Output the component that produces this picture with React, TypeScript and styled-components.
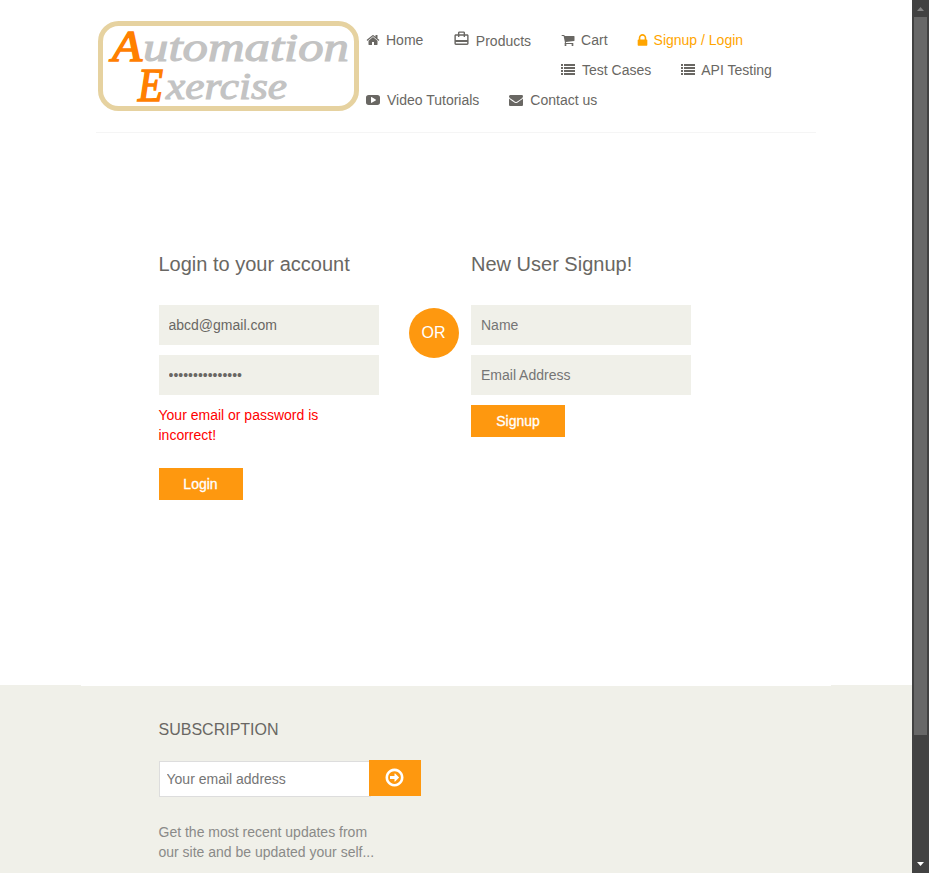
import React from "react";
import styled, { createGlobalStyle } from "styled-components";

const GlobalStyle = createGlobalStyle`
  * { box-sizing: border-box; }
  body {
    margin: 0;
    background: #fff;
    color: #696763;
    font: 14px/20px "Liberation Sans", Arial, sans-serif;
    overflow: hidden;
  }
  input, button { font: inherit; }
`;

const Window = styled.div`
  display: flex;
  width: 929px;
  height: 873px;
  overflow: hidden;
`;

const Page = styled.div`
  display: flex;
  flex-direction: column;
  width: 912px;
`;

const Header = styled.header`
  display: flex;
  height: 133px;
  width: 720px;
  margin-left: 96px;
  padding: 20px 0 0 1px;
  border-bottom: 1px solid #f5f5f5;
`;

const LogoArt = styled.svg`
  display: block;
  width: 264px;
  height: 92px;
  flex: none;
  font-family: "Liberation Serif", serif;
  font-style: italic;
`;

const LogoInitial = styled.text`
  fill: #ff8000;
  stroke: #ff8000;
  stroke-width: 1.6px;
`;

const LogoWord = styled.text`
  fill: #c3c3c3;
  stroke: #c3c3c3;
  stroke-width: 1.1px;
`;

const Nav = styled.nav`
  margin: 10px 0 0 5px;
  display: flex;
  flex-direction: column;
  gap: 10px;
`;

const NavRow = styled.div<{ $indent?: number }>`
  display: flex;
  gap: 30px;
  height: 20px;
  padding-left: ${(p) => p.$indent ?? 0}px;
`;

const NavLink = styled.a<{ $active?: boolean; $drop?: number }>`
  display: flex;
  white-space: nowrap;
  padding-top: ${(p) => p.$drop ?? 0}px;
  color: ${(p) => (p.$active ? "orange" : "#696763")};
`;

const IconSlot = styled.span<{ $width: number; $shift?: number; $lift?: number }>`
  display: block;
  flex: none;
  width: ${(p) => p.$width}px;
  margin-top: ${(p) => 3 - (p.$lift ?? 0)}px;
  & > svg { margin-left: ${(p) => p.$shift ?? 0}px; }
`;

const Glyph = styled.svg<{ $size?: number }>`
  display: block;
  width: ${(p) => p.$size ?? 14}px;
  height: ${(p) => p.$size ?? 14}px;
  fill: currentColor;
  overflow: visible;
`;

const Forms = styled.main`
  display: flex;
  align-items: flex-start;
  height: 552px;
  padding: 120px 0 0 158.5px;
`;

const Form = styled.form`
  display: flex;
  flex-direction: column;
  align-items: flex-start;
  width: 220px;
`;

const Title = styled.h2`
  margin: 0 0 29px;
  font-size: 20px;
  font-weight: 400;
  line-height: 23px;
  white-space: nowrap;
`;

const Field = styled.input`
  width: 220px;
  height: 40px;
  margin: 0 0 10px;
  padding: 0 0 0 10px;
  border: 0;
  outline: 0;
  background: #f0f0e9;
  color: #696763;
  &::placeholder { color: #757575; }
`;

const ErrorText = styled.p`
  width: 190px;
  margin: 0 0 23px;
  color: red;
`;

const Submit = styled.button<{ $width: number }>`
  width: ${(p) => p.$width}px;
  height: 32px;
  padding: 0;
  border: 0;
  background: #fe980f;
  color: #fff;
  -webkit-text-stroke: 0.3px #fff;
`;

const Or = styled.div`
  width: 50px;
  height: 50px;
  margin: 55px 12px 0 30.5px;
  padding-right: 1px;
  border-radius: 50%;
  background: #fe980f;
  color: #fff;
  font-size: 16px;
  line-height: 50px;
  text-align: center;
`;

const Footer = styled.footer`
  flex: 1;
  background: #f0f0e9;
`;

const Strip = styled.div`
  width: 750px;
  height: 1px;
  margin: 0 auto;
  background: #fff;
`;

const Subscription = styled.section`
  padding: 34px 0 0 158.5px;
`;

const SubTitle = styled.h2`
  margin: 0 0 21px;
  font-size: 16px;
  font-weight: 400;
  line-height: 19px;
`;

const SubForm = styled.form`
  display: flex;
  height: 37px;
`;

const SubInput = styled.input`
  width: 212px;
  height: 36px;
  margin: 1px -2px 0 0;
  padding: 0 7px;
  border: 1px solid #ddd;
  background: #fff;
  &::placeholder { color: #757575; }
`;

const SubButton = styled.button`
  display: flex;
  justify-content: center;
  width: 52px;
  height: 36px;
  padding: 6.5px 0 0;
  border: 0;
  background: #fe980f;
  color: #fff;
  z-index: 1;
`;

const Note = styled.p`
  width: 230px;
  margin: 25px 0 0;
  color: #8a8a88;
`;

const Scrollbar = styled.div`
  display: flex;
  flex-direction: column;
  align-items: center;
  width: 17px;
  background: #424242;
`;

const ScrollArrow = styled.svg`
  display: block;
  flex: none;
  width: 17px;
  height: 17px;
`;

const Thumb = styled.div`
  width: 13px;
  height: 718px;
  margin-bottom: auto;
  background: #686868;
`;

const paths = {
  home: "M1472 992v480q0 26-19 45t-45 19h-384v-384h-256v384h-384q-26 0-45-19t-19-45v-480q0-1 .5-3t.5-3l575-474 575 474q1 2 1 6zm223-69l-62 74q-8 9-21 11h-3q-13 0-21-7l-692-577-692 577q-12 8-24 7-13-2-21-11l-62-74q-8-10-7-23.5t11-21.5l719-599q32-26 76-26t76 26l244 204v-195q0-14 9-23t23-9h192q14 0 23 9t9 23v408l219 182q10 8 11 21.5t-7 23.5z",
  cart: "M704 1536q0 52-38 90t-90 38-90-38-38-90 38-90 90-38 90 38 38 90zm896 0q0 52-38 90t-90 38-90-38-38-90 38-90 90-38 90 38 38 90zm128-1088v512q0 24-16.5 42.5t-40.5 21.5l-1044 122q13 60 13 70 0 16-24 64h920q26 0 45 19t19 45-19 45-45 19h-1024q-26 0-45-19t-19-45q0-11 8-31.5t16-36 21.5-40 15.5-29.5l-177-823h-204q-26 0-45-19t-19-45 19-45 45-19h256q16 0 28.5 6.5t19.5 15.5 13 24.5 8 26 5.5 29.5 4.5 26h1201q26 0 45 19t19 45z",
  lock: "M640 768h512v-192q0-106-75-181t-181-75-181 75-75 181v192zm832 96v576q0 40-28 68t-68 28h-960q-40 0-68-28t-28-68v-576q0-40 28-68t68-28h32v-192q0-184 132-316t316-132 316 132 132 316v192h32q40 0 68 28t28 68z",
  list: "M0 1280h256v256H0zM0 896h256v256H0zM0 512h256v256H0zM384 1280h1408v256H384zM384 896h1408v256H384zM384 512h1408v256H384zM0 128h256v256H0zM384 128h1408v256H384z",
  video: "M350 256H1442Q1792 256 1792 606V1186Q1792 1536 1442 1536H350Q0 1536 0 1186V606Q0 256 350 256ZM711 520Q640 480 640 576V1216Q640 1312 721 1260L1240 950Q1320 896 1240 842Z",
  mail: "M1792 710v794q0 66-47 113t-113 47h-1472q-66 0-113-47t-47-113v-794q44 49 101 87 362 246 497 345 57 42 92.5 65.5t94.5 48 110 24.5h2q51 0 110-24.5t94.5-48 92.5-65.5q170-123 498-345 57-39 100-87zm0-294q0 79-49 151t-122 123q-376 261-468 325-10 7-42.5 31t-54 38.5-52 32.5-57.5 27-50 9h-2q-23 0-50-9t-57.5-27-52-32.5-54-38.5-42.5-31q-91-64-262-182.5t-205-142.5q-62-42-117-115.5t-55-136.5q0-78 41.5-130t118.5-52h1472q65 0 112.5 47t47.5 113z",
  arrow: "M1280 896q0 14-9 23l-320 320q-9 9-23 9-13 0-22.5-9.5t-9.5-22.5v-192h-352q-13 0-22.5-9.5t-9.5-22.5v-192q0-13 9.5-22.5t22.5-9.5h352v-192q0-14 9-23t23-9q12 0 24 10l319 319q9 9 9 23zm160 0q0-148-73-273t-198-198-273-73-273 73-198 198-73 273 73 273 198 198 273 73 273-73 198-198 73-273zm224 0q0 209-103 385.5t-279.5 279.5-385.5 103-385.5-103-279.5-279.5-103-385.5 103-385.5 279.5-279.5 385.5-103 385.5 103 279.5 279.5 103 385.5z",
};

function Icon({ name, size }: { name: keyof typeof paths; size?: number }) {
  return (
    <Glyph viewBox="0 0 1792 1792" $size={size} fillRule="evenodd">
      <path d={paths[name]} />
    </Glyph>
  );
}

function Logo() {
  return (
    <LogoArt viewBox="0 0 264 92">
      <rect x="3.5" y="3.5" width="256" height="85" rx="18" fill="#fff" stroke="#e6d2a0" strokeWidth="5" />
      <LogoInitial x="15" y="41" fontSize="44" textLength="30" lengthAdjust="spacingAndGlyphs">A</LogoInitial>
      <LogoWord x="46" y="41" fontSize="41" textLength="206" lengthAdjust="spacingAndGlyphs">utomation</LogoWord>
      <LogoInitial x="41" y="81" fontSize="46" textLength="25" lengthAdjust="spacingAndGlyphs">E</LogoInitial>
      <LogoWord x="69" y="79" fontSize="38" textLength="121" lengthAdjust="spacingAndGlyphs">xercise</LogoWord>
    </LogoArt>
  );
}

export default function App() {
  return (
    <>
      <GlobalStyle />
      <Window>
        <Page>
          <Header>
            <Logo />
            <Nav>
              <NavRow>
                <NavLink><IconSlot $width={20} $shift={-0.5}><Icon name="home" /></IconSlot>Home</NavLink>
                <NavLink $drop={1}>
                  <IconSlot $width={22.5} $lift={4}>
                    <Glyph viewBox="0 0 24 24" $size={17}>
                      <path d="M20 6h-3V4c0-1.11-.89-2-2-2H9c-1.11 0-2 .89-2 2v2H4c-1.11 0-2 .89-2 2v11c0 1.11.89 2 2 2h16c1.11 0 2-.89 2-2V8c0-1.11-.89-2-2-2zM9 4h6v2H9V4zm11 15H4v-2h16v2zm0-5H4V8h3v2h2V8h6v2h2V8h3v6z" />
                    </Glyph>
                  </IconSlot>
                  Products
                </NavLink>
                <NavLink><IconSlot $width={20} $shift={-0.5}><Icon name="cart" /></IconSlot>Cart</NavLink>
                <NavLink $active><IconSlot $width={16} $shift={-2.5}><Icon name="lock" size={15} /></IconSlot>Signup / Login</NavLink>
              </NavRow>
              <NavRow $indent={195}>
                <NavLink><IconSlot $width={21}><Icon name="list" /></IconSlot>Test Cases</NavLink>
                <NavLink><IconSlot $width={20}><Icon name="list" /></IconSlot>API Testing</NavLink>
              </NavRow>
              <NavRow>
                <NavLink><IconSlot $width={21}><Icon name="video" /></IconSlot>Video Tutorials</NavLink>
                <NavLink><IconSlot $width={21}><Icon name="mail" /></IconSlot>Contact us</NavLink>
              </NavRow>
            </Nav>
          </Header>
          <Forms>
            <Form>
              <Title>Login to your account</Title>
              <Field type="email" defaultValue="abcd@gmail.com" />
              <Field type="password" defaultValue="password1234567" />
              <ErrorText>Your email or password is incorrect!</ErrorText>
              <Submit type="button" $width={84}>Login</Submit>
            </Form>
            <Or>OR</Or>
            <Form>
              <Title>New User Signup!</Title>
              <Field placeholder="Name" />
              <Field placeholder="Email Address" />
              <Submit type="button" $width={94}>Signup</Submit>
            </Form>
          </Forms>
          <Footer>
            <Strip />
            <Subscription>
              <SubTitle>SUBSCRIPTION</SubTitle>
              <SubForm>
                <SubInput placeholder="Your email address" />
                <SubButton type="button"><Icon name="arrow" size={21} /></SubButton>
              </SubForm>
              <Note>Get the most recent updates from<br />our site and be updated your self...</Note>
            </Subscription>
          </Footer>
        </Page>
        <Scrollbar>
          <ScrollArrow viewBox="0 0 17 17"><path d="M5 11h7L8.5 7z" fill="#868686" /></ScrollArrow>
          <Thumb />
          <ScrollArrow viewBox="0 0 17 17"><path d="M5 6h7L8.5 10z" fill="#fff" /></ScrollArrow>
        </Scrollbar>
      </Window>
    </>
  );
}
